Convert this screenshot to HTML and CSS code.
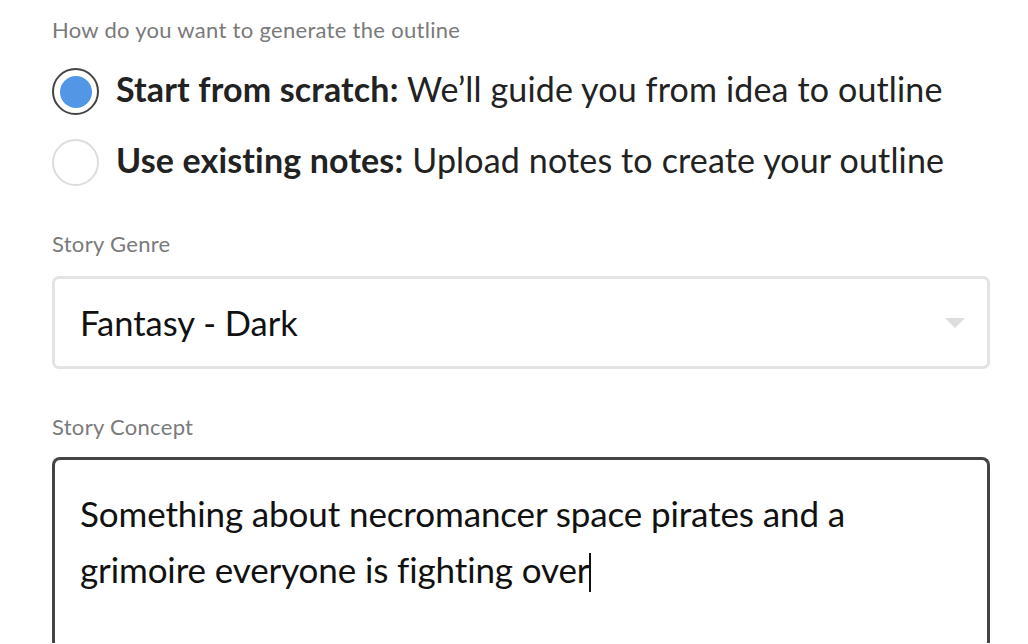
FILE: index.html
```html
<!DOCTYPE html>
<html lang="en">
<head>
<meta charset="utf-8">
<title>Outline</title>
<link rel="stylesheet" href="styles.css">
</head>
<body>
<main class="form">
  <div class="field-label first">How do you want to generate the outline</div>
  <div class="options">
    <label class="option">
      <span class="radio checked"><span class="dot"></span></span>
      <span class="option-text"><b>Start from scratch:</b> We’ll guide you from idea to outline</span>
    </label>
    <label class="option">
      <span class="radio"></span>
      <span class="option-text"><b>Use existing notes:</b> Upload notes to create your outline</span>
    </label>
  </div>

  <div class="field-label">Story Genre</div>
  <div class="select">
    <span class="select-value">Fantasy - Dark</span>
    <span class="select-arrow"></span>
  </div>

  <div class="field-label concept">Story Concept</div>
  <div class="textarea">Something about necromancer space pirates and a grimoire everyone is fighting over<span class="caret"></span></div>
</main>
</body>
</html>
```

FILE: styles.css
```css
html, body {
  margin: 0;
  padding: 0;
  background: #ffffff;
}

body {
  font-family: "Lato", "Open Sans", sans-serif;
  color: #222222;
  overflow: hidden;
  height: 644px;
}

.form {
  padding: 16px 38px 0 52px;
  display: flex;
  flex-direction: column;
}

.field-label {
  font-size: 22px;
  letter-spacing: 0.3px;
  line-height: 28px;
  color: #7a7a7a;
  margin-top: 38px;
  margin-bottom: 18px;
}

.field-label.first {
  margin-top: 0;
  margin-bottom: 0;
}

.field-label.concept {
  margin-top: 44px;
  margin-bottom: 16px;
}

.options {
  display: flex;
  flex-direction: column;
  gap: 24px;
  padding-top: 24px;
  margin-bottom: 6px;
}

.option {
  display: flex;
  align-items: center;
  gap: 17px;
  height: 47px;
}

.radio {
  width: 43px;
  height: 43px;
  border: 2px solid #dddddd;
  border-radius: 50%;
  display: flex;
  align-items: center;
  justify-content: center;
  flex: none;
}

.radio.checked {
  border-color: #444444;
}

.dot {
  width: 32px;
  height: 32px;
  border-radius: 50%;
  background: #5296e5;
}

.option-text {
  font-size: 34px;
  letter-spacing: 0.15px;
  line-height: 40px;
  padding-bottom: 5px;
  color: #222222;
  white-space: nowrap;
}

.option-text b {
  font-weight: 700;
}

.select {
  height: 93px;
  box-sizing: border-box;
  border: 3px solid #e3e3e3;
  border-radius: 7px;
  display: flex;
  align-items: center;
  justify-content: space-between;
  padding: 0 22px 0 25px;
}

.select-value {
  font-size: 34.5px;
  color: #111111;
}

.select-arrow {
  width: 0;
  height: 0;
  border-left: 10px solid transparent;
  border-right: 10px solid transparent;
  border-top: 10px solid #dddddd;
}

.textarea {
  box-sizing: border-box;
  border: 3px solid #444444;
  border-bottom: none;
  border-radius: 8px 8px 0 0;
  padding: 25px 120px 0 25px;
  height: 186px;
  font-size: 35px;
  letter-spacing: -0.12px;
  line-height: 56px;
  color: #111111;
}

.caret {
  display: inline-block;
  width: 2px;
  height: 39px;
  background: #111111;
  vertical-align: -9px;
}
```
